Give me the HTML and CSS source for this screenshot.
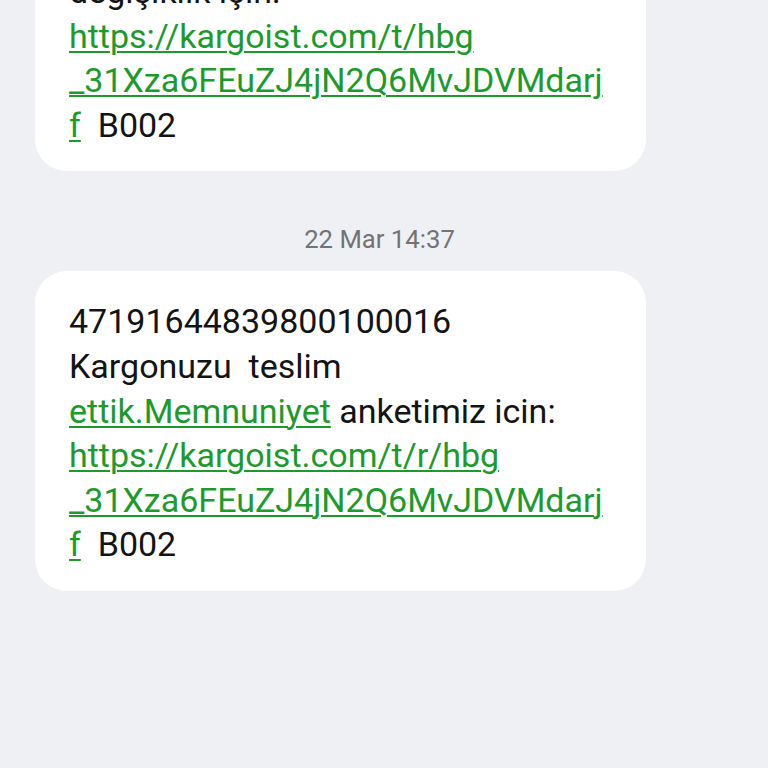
FILE: index.html
```html
<!DOCTYPE html>
<html>
<head>
<meta charset="utf-8">
<link rel="stylesheet" href="styles.css">
</head>
<body>
<div class="thread">
  <div class="bubble first">
    <div class="msg">değişiklik için:<br><a class="link">https://kargoist.com/t/hbg<br>_31Xza6FEuZJ4jN2Q6MvJDVMdarj<br>f</a>&nbsp; B002</div>
  </div>
  <div class="date">22 Mar 14:37</div>
  <div class="bubble">
    <div class="msg">47191644839800100016<br>Kargonuzu&nbsp; teslim<br><a class="link">ettik.Memnuniyet</a> anketimiz icin:<br><a class="link">https://kargoist.com/t/r/hbg<br>_31Xza6FEuZJ4jN2Q6MvJDVMdarj<br>f</a>&nbsp; B002</div>
  </div>
</div>
</body>
</html>
```
FILE: styles.css
```css
html, body {
  margin: 0;
  padding: 0;
  background: #eff0f4;
  height: 768px;
  overflow: hidden;
}
.thread {
  display: flex;
  flex-direction: column;
  padding-left: 35px;
  margin-top: -57px;
}
.bubble {
  width: 611px;
  box-sizing: border-box;
  background: #ffffff;
  border-radius: 32px;
  padding: 28px 20px 24px 34px;
}
.bubble.first {
  padding-top: 26px;
}
.msg {
  font-family: Roboto, "Noto Sans", sans-serif;
  font-size: 34px;
  line-height: 44.6px;
  color: #141414;
  white-space: nowrap;
}
.link {
  color: #1d9a2c;
  text-decoration: underline;
  text-decoration-thickness: 2px;
  text-underline-offset: 3px;
}
.date {
  font-family: Roboto, "Noto Sans", sans-serif;
  font-size: 25.7px;
  color: #737373;
  text-align: center;
  width: 689px;
  padding: 53px 0 17px 0;
  line-height: 30px;
}
```
